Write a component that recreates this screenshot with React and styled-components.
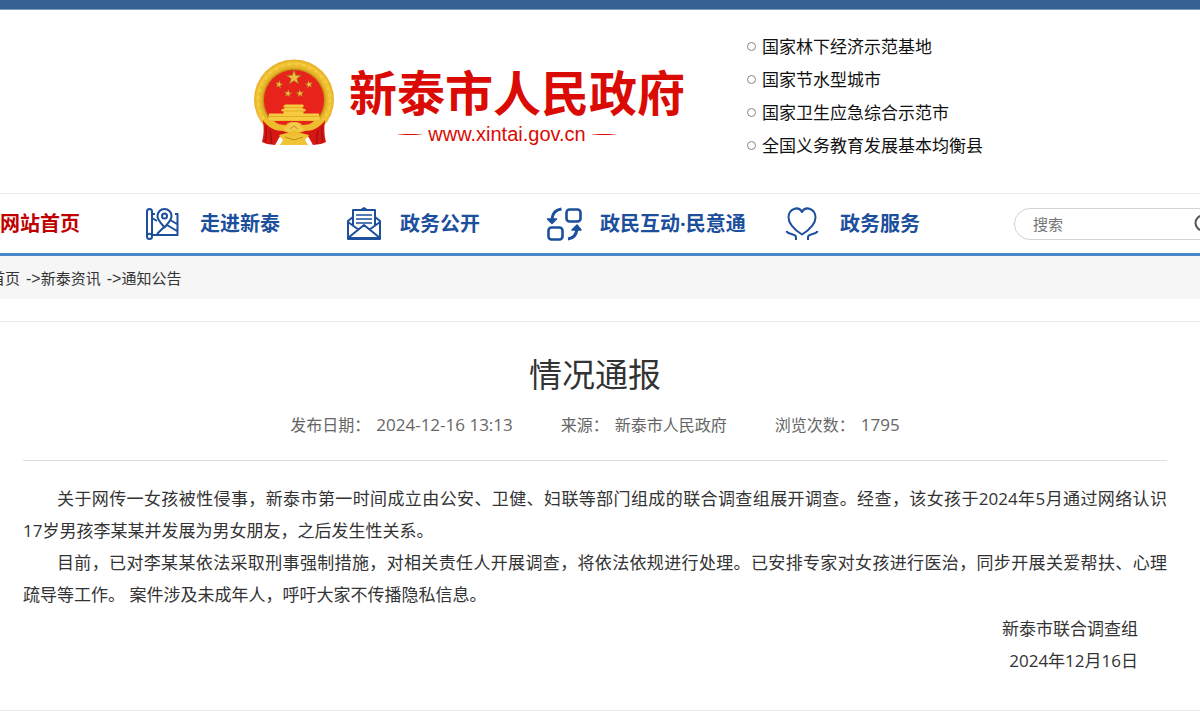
import React from "react";
import styled, { createGlobalStyle } from "styled-components";

const GlobalStyle = createGlobalStyle`
  *, *::before, *::after { box-sizing: border-box; }
  body {
    margin: 0;
    background: #fff;
    color: #333;
    font-family: "Open Sans", "Noto Sans CJK SC", sans-serif;
    overflow-x: hidden;
  }
  a { color: inherit; text-decoration: none; }
`;

const TopBar = styled.div`
  height: 10px;
  background: #366092;
  border-bottom: 1px solid #7d9cc0;
`;

const Header = styled.header`
  display: flex;
  justify-content: center;
  gap: 62px;
  padding: 20px 0 31px 36px;
`;

const Brand = styled.a`
  display: flex;
  align-items: flex-start;
  gap: 14px;
  padding-top: 29px;
`;

const BrandText = styled.div`
  display: flex;
  flex-direction: column;
  align-items: center;
`;

const SiteName = styled.span`
  color: #d90b04;
  font-family: "Noto Sans CJK SC", sans-serif;
  font-size: 48px;
  font-weight: 700;
  line-height: 62px;
  white-space: nowrap;
`;

const SiteUrl = styled.span`
  display: flex;
  align-items: center;
  gap: 6px;
  margin-right: 20px;
  color: #d90b04;
  font-family: "Liberation Sans", sans-serif;
  font-size: 20px;
  line-height: 26px;

  &::before,
  &::after {
    content: "";
    width: 24px;
    height: 1px;
    background: linear-gradient(90deg, #f3b5b2, #d90b04 30%, #d90b04 70%, #f3b5b2);
  }
`;

const Honours = styled.ul`
  margin: 0;
  padding: 0;
  list-style: none;
  color: #111;
  font-size: 17px;
  line-height: 33px;
  white-space: nowrap;
`;

const Honour = styled.li`
  display: flex;
  align-items: center;
  gap: 6px;
  &::before {
    content: "";
    width: 9px;
    height: 9px;
    border: 1px solid #888;
    border-radius: 50%;
  }
`;

const Nav = styled.nav`
  display: flex;
  align-items: center;
  height: 63px;
  border-top: 1px solid #e8edf2;
  border-bottom: 3px solid #4a86c8;
  overflow: hidden;
`;

const NavLink = styled.a`
  display: flex;
  flex: 0 0 auto;
  align-items: center;
  gap: 20px;
  width: ${(p) => p.$width}px;
  color: ${(p) => (p.$active ? "#c00000" : "#1c4f9c")};
  font-size: 20px;
  font-weight: 700;
  line-height: 30px;
  white-space: nowrap;
`;

const SearchBox = styled.form`
  display: flex;
  flex: 0 0 auto;
  align-items: center;
  width: 216px;
  height: 32px;
  margin-left: auto;
  margin-right: -30px;
  padding: 0 15px 0 18px;
  border: 1px solid #d4d4d4;
  border-radius: 16px;
`;

const SearchInput = styled.input`
  flex: 1;
  min-width: 0;
  padding: 0;
  border: 0;
  outline: 0;
  background: none;
  font: inherit;
  font-size: 15px;
  &::placeholder { color: #757575; }
`;

const SearchButton = styled.button`
  display: flex;
  padding: 0;
  border: 0;
  background: none;
`;

const Crumbs = styled.nav`
  display: flex;
  gap: 6px;
  height: 43px;
  margin-left: -10px;
  padding-bottom: 1px;
  align-items: center;
  background: #f6f6f6;
  color: #333;
  font-size: 15px;
  white-space: nowrap;
`;

const Arrow = styled.span`
  font-family: "Liberation Sans", sans-serif;
  font-size: 16px;
`;

const Article = styled.article`
  margin-top: 22px;
  padding: 28px 33px 33px 23px;
  border-top: 1px solid #e8e8e8;
  border-bottom: 1px solid #e8e8e8;
`;

const Title = styled.h1`
  margin: 0;
  font-size: 33px;
  font-weight: 400;
  line-height: 50px;
  text-align: center;
`;

const Meta = styled.div`
  display: flex;
  justify-content: center;
  gap: 48px;
  padding: 13px 0 23px;
  border-bottom: 1px solid #ddd;
  color: #666;
  font-size: 16px;
  line-height: 24px;
`;

const MetaItem = styled.span`
  display: flex;
  gap: 6px;
`;

const Figures = styled.span`
  font-size: 17px;
`;

const Body = styled.div`
  padding-top: 22px;
  font-size: 17px;
  line-height: 32px;
`;

const Paragraph = styled.p`
  margin: 0;
  text-align: justify;
  text-indent: 2em;
`;

const Keep = styled.span`
  white-space: nowrap;
`;

const Signature = styled.div`
  padding: 2px 29px 0 0;
  text-align: right;
`;

const STAR = "M0-10 2.3-3.1 9.5-3.1 3.7 1.2 5.9 8.1 0 3.8-5.9 8.1-3.7 1.2-9.5-3.1-2.3-3.1Z";

const Emblem = () => (
  <svg width="82" height="88" viewBox="0 0 82 88" aria-hidden="true">
    <defs>
      <radialGradient id="gold" cx="41" cy="41" r="41" gradientUnits="userSpaceOnUse">
        <stop offset=".72" stopColor="#b97a0c" />
        <stop offset=".79" stopColor="#e5b429" />
        <stop offset=".9" stopColor="#f3c736" />
        <stop offset="1" stopColor="#e0a722" />
      </radialGradient>
    </defs>
    <circle cx="41" cy="40.5" r="40" fill="url(#gold)" />
    <circle
      cx="41"
      cy="40.5"
      r="35.5"
      fill="none"
      stroke="#f9d95c"
      strokeWidth="2"
      strokeDasharray="3 4"
      opacity=".6"
    />
    <circle cx="41" cy="41" r="30" fill="#e8231c" />
    <g fill="#ecc03e" stroke="#a8651a" strokeWidth=".9">
      <path d={STAR} transform="translate(41 18.700) scale(.78)" />
      <path d={STAR} transform="translate(26 25.500) rotate(12) scale(.4)" />
      <path d={STAR} transform="translate(56 25.500) rotate(-12) scale(.4)" />
      <path d={STAR} transform="translate(35 34.500) rotate(8) scale(.4)" />
      <path d={STAR} transform="translate(47 34.500) rotate(-8) scale(.4)" />
    </g>
    <path
      d="M32 45.500h18l1 2-1.500.5v1.500l2.500.5 1 2-2.500.5v2H66l1 6.500H15l1-6.500h14.500v-2L28 52l1-2 2.500-.5V48l-1.500-.5Z"
      fill="#f6cc3e"
    />
    <path d="M31 48.500h19M30 52h22M16 57.500h50" stroke="#dc9c22" strokeWidth=".7" />
    <path d="M12 61h58l-4 12-14 5H30l-14-5Z" fill="#edbd2f" />
    <path d="M21 62h40c-3 3-7 4-12 4-2-3-5-3-8-3s-6 0-8 3c-5 0-9-1-12-4Z" fill="#e8231c" />
    <path d="M10 61c5 8 13 11 20 11l6 2-9 3-5 9-8-1-5-2c2-7 2-14 1-22Z" fill="#d61713" />
    <path d="M72 61c-5 8-13 11-20 11l-6 2 9 3 5 9 8-1 5-2c-2-7-2-14-1-22Z" fill="#d61713" />
    <path
      d="M13 67q1 9-1 16M17 71q2 7 1 14M69 67q-1 9 1 16M65 71q-2 7-1 14"
      fill="none"
      stroke="#9c1010"
      strokeWidth="1.200"
    />
    <path d="M31 70c2-2 4-2 5-5q5-3 10 0c1 3 3 3 5 5l-5 3-5-2-5 2Z" fill="#f3cb4d" />
    <path d="m26 76 8-2 7 3 7-3 8 2-4 5 3 5H27l3-5Z" fill="#f0c334" />
    <path d="m32 78 9 3 9-3M37 70l4-3 4 3" fill="none" stroke="#c58a1c" />
  </svg>
);

const Icon = ({ children }) => (
  <svg
    width="36"
    height="36"
    viewBox="0 0 36 36"
    fill="none"
    stroke="#1c4f9c"
    strokeWidth="2"
    strokeLinejoin="round"
    overflow="visible"
    aria-hidden="true"
  >
    {children}
  </svg>
);

const MapIcon = () => (
  <Icon>
    <rect x="3" y="3" width="5" height="30" rx="2.500" />
    <path d="M3 29q2.500-2.500 5 0M8 29h25.500V8H31M8 8h3M8 12l5 3M33 18l-7-4M13 28l8-8M19 22l4-3 10 6" />
    <path d="M20.500 21.500c-4-5-7-7.500-7-11.500a7 7 0 0 1 14 0c0 4-3 6.500-7 11.500Z" fill="#fff" />
    <circle cx="20.500" cy="10" r="2.500" />
  </Icon>
);

const MailIcon = () => (
  <Icon>
    <path d="M9 11 4 15v18h32V15l-5-4M4 16l11 8M36 16l-11 8M4 32l16-13 16 13" />
    <path d="M4 32.500h32" strokeWidth="3" />
    <path d="M9 20V4h22v16M17 4l3-2 3 2" />
    <path d="M12 9h16M12 13h16M12 17h16" strokeWidth="1.600" />
  </Icon>
);

const ExchangeIcon = () => (
  <Icon>
    <rect x="22.500" y="3.500" width="14" height="12" rx="3" strokeWidth="2.600" />
    <rect x="4.500" y="21.500" width="14" height="12" rx="3" strokeWidth="2.600" />
    <path d="M17.500 3Q9 4 8 13M24 33q8-1 9-10" strokeWidth="3" />
    <path d="M3.500 13 8 17.500 12.500 13ZM28 24l5-5 4 5Z" fill="#1c4f9c" strokeWidth="1.500" />
  </Icon>
);

const HeartIcon = () => (
  <Icon>
    <path d="M18 28.500C11 24 4.500 18 4.500 11.500c0-9 10-12 13.500-5.500 3.500-6.500 13.500-3.500 13.500 5.500 0 6.500-6.500 12.500-13.500 17Z" />
    <path d="M2.500 25c1 4 9 2 9.500 6v3M33.500 25c-1 4-9 2-9.500 6v3" />
  </Icon>
);

const SearchIcon = () => (
  <svg width="20" height="20" viewBox="0 0 20 20" fill="none" stroke="#555" strokeWidth="2" aria-hidden="true">
    <circle cx="9" cy="9" r="7.500" />
    <path d="m14.500 14.500 4 4" />
  </svg>
);

const honours = [
  "国家林下经济示范基地",
  "国家节水型城市",
  "国家卫生应急综合示范市",
  "全国义务教育发展基本均衡县",
];

const sections = [
  { label: "走进新泰", icon: <MapIcon />, width: 200 },
  { label: "政务公开", icon: <MailIcon />, width: 200 },
  { label: "政民互动·民意通", icon: <ExchangeIcon />, width: 240 },
  { label: "政务服务", icon: <HeartIcon />, width: 200 },
];

export default function App() {
  return (
    <>
      <GlobalStyle />
      <TopBar />
      <Header>
        <Brand href="#">
          <Emblem />
          <BrandText>
            <SiteName>新泰市人民政府</SiteName>
            <SiteUrl>www.xintai.gov.cn</SiteUrl>
          </BrandText>
        </Brand>
        <Honours>
          {honours.map((h) => (
            <Honour key={h}>{h}</Honour>
          ))}
        </Honours>
      </Header>
      <Nav>
        <NavLink href="#" $active $width={144}>网站首页</NavLink>
        {sections.map((s) => (
          <NavLink key={s.label} href="#" $width={s.width}>
            {s.icon}
            {s.label}
          </NavLink>
        ))}
        <SearchBox>
          <SearchInput type="text" placeholder="搜索" aria-label="搜索" />
          <SearchButton type="button" aria-label="搜索">
            <SearchIcon />
          </SearchButton>
        </SearchBox>
      </Nav>
      <Crumbs>
        <a href="#">首页</a>
        <span><Arrow>-&gt;</Arrow><a href="#">新泰资讯</a></span>
        <span><Arrow>-&gt;</Arrow><a href="#">通知公告</a></span>
      </Crumbs>
      <Article>
        <Title>情况通报</Title>
        <Meta>
          <MetaItem><span>发布日期：</span><Figures>2024-12-16 13:13</Figures></MetaItem>
          <MetaItem><span>来源：</span><span>新泰市人民政府</span></MetaItem>
          <MetaItem><span>浏览次数：</span><Figures>1795</Figures></MetaItem>
        </Meta>
        <Body>
          <Paragraph>
            关于网传一女孩被性侵事，新泰市第一时间成立由公安、卫健、妇联等部门组成的联合调查组展开调查。经查，该女孩于2024年5月通过网络认识<Keep>17岁男孩</Keep>李某某并发展为男女朋友，之后发生性关系。
          </Paragraph>
          <Paragraph>
            目前，已对李某某依法采取刑事强制措施，对相关责任人开展调查，将依法依规进行处理。已安排专家对女孩进行医治，同步开展关爱帮扶、心理<Keep>疏导等工作</Keep>。 案件涉及未成年人，呼吁大家不传播隐私信息。
          </Paragraph>
          <Signature>
            新泰市联合调查组
            <br />
            2024年12月16日
          </Signature>
        </Body>
      </Article>
    </>
  );
}
